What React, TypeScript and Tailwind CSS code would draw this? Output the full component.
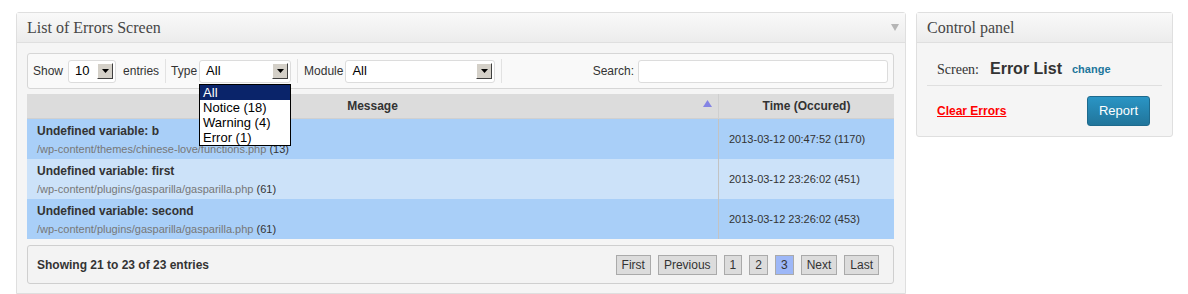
import React from "react";

const sans = "font-['Liberation_Sans',Arial,sans-serif]";
const serif = "font-['Liberation_Serif','Times_New_Roman',serif]";

const SelectBox: React.FC<{ value: string; w: string }> = ({ value, w }) => (
  <div className={`${w} h-[23px] flex items-center justify-between bg-white border border-[#dcdcdc] rounded-[3px] pl-[6px] pr-[2px]`}>
    <span className="text-[13px] text-black">{value}</span>
    <span className="w-[16px] h-[16px] bg-[#d4d0c8] border border-t-white border-l-white border-r-[#404040] border-b-[#404040] flex items-center justify-center">
      <svg width="7" height="4" viewBox="0 0 7 4">
        <path d="M0 0h7L3.5 4z" fill="#000" />
      </svg>
    </span>
  </div>
);

const rows = [
  { msg: "Undefined variable: b", file: "/wp-content/themes/chinese-love/functions.php", line: "(13)", time: "2013-03-12 00:47:52 (1170)", bg: "bg-[#a9cff8]" },
  { msg: "Undefined variable: first", file: "/wp-content/plugins/gasparilla/gasparilla.php", line: "(61)", time: "2013-03-12 23:26:02 (451)", bg: "bg-[#cce2f9]" },
  { msg: "Undefined variable: second", file: "/wp-content/plugins/gasparilla/gasparilla.php", line: "(61)", time: "2013-03-12 23:26:02 (453)", bg: "bg-[#a9cff8]" },
];

const pages = ["First", "Previous", "1", "2", "3", "Next", "Last"];

export default function App() {
  return (
    <div className={`w-[1188px] h-[294px] bg-white flex items-start gap-[10px] pl-[16px] pt-[12px] overflow-hidden ${sans} text-[#333]`}>
      {/* main panel */}
      <div className="w-[890px] h-[282px] border border-[#dfdfdf] rounded-t-[3px] bg-[#f5f5f5] flex flex-col">
        <div className="h-[30px] flex items-center justify-between border-b border-[#dfdfdf] bg-gradient-to-b from-[#f9f9f9] to-[#ececec] pl-[10px] pr-[6px]">
          <span className={`${serif} text-[16px] text-[#464646]`}>List of Errors Screen</span>
          <svg width="8" height="7" viewBox="0 0 8 7">
            <path d="M0 0h8L4 7z" fill="#b5b5b5" />
          </svg>
        </div>
        <div className="pl-[10px] pr-[11px] pt-[10px] flex flex-col">
          {/* toolbar */}
          <div className="h-[36px] border border-[#d6d6d6] rounded-[3px] bg-[#f9f9f9] flex items-center px-[5px] text-[12px] relative">
            <span>Show</span>
            <div className="ml-[5px]">
              <SelectBox value="10" w="w-[48px]" />
            </div>
            <span className="ml-[7px]">entries</span>
            <span className="w-px h-[24px] bg-[#e2e2e2] ml-[6px]" />
            <span className="ml-[5px]">Type</span>
            <div className="ml-[2px] relative">
              <SelectBox value="All" w="w-[92px]" />
              <div className="absolute left-0 top-[24px] w-[92px] bg-white border border-black text-[13px] text-black leading-[15px] z-10">
                <div className="bg-[#0a246a] text-white pl-[3px]">All</div>
                <div className="pl-[3px]">Notice (18)</div>
                <div className="pl-[3px]">Warning (4)</div>
                <div className="pl-[3px]">Error (1)</div>
              </div>
            </div>
            <span className="w-px h-[24px] bg-[#e2e2e2] ml-[6px]" />
            <span className="ml-[6px]">Module</span>
            <div className="ml-[2px]">
              <SelectBox value="All" w="w-[150px]" />
            </div>
            <span className="w-px h-[24px] bg-[#e2e2e2] ml-[6px]" />
            <span className="ml-auto">Search:</span>
            <div className="ml-[4px] w-[250px] h-[23px] bg-white border border-[#dcdcdc] rounded-[3px]" />
          </div>
          {/* table */}
          <div className="mt-[5px] flex flex-col">
            <div className="h-[25px] flex bg-[#dcdcdc] text-[12px] font-bold border-b border-[#d0d0d0]">
              <div className="w-[692px] relative flex items-center justify-center border-r border-[#cfcfcf]">
                Message
                <svg className="absolute right-[6px] top-[6px]" width="9" height="7" viewBox="0 0 9 7">
                  <path d="M4.5 0L9 7H0z" fill="#8484e4" />
                </svg>
              </div>
              <div className="flex-1 flex items-center justify-center">Time (Occured)</div>
            </div>
            {rows.map((r) => (
              <div key={r.time} className={`h-[40px] flex ${r.bg}`}>
                <div className="w-[692px] border-r border-[#c3c3c3] pl-[10px] pt-[4px]">
                  <div className="text-[12px] font-bold leading-[17px] text-[#333]">{r.msg}</div>
                  <div className="text-[11px] leading-[18px]">
                    <span className="text-[#777]">{r.file}</span> <span className="text-[#333]">{r.line}</span>
                  </div>
                </div>
                <div className="flex-1 flex items-center pl-[10px] text-[11px] text-[#333]">{r.time}</div>
              </div>
            ))}
          </div>
          {/* footer */}
          <div className="mt-[6px] h-[39px] border border-[#cfcfcf] rounded-[3px] bg-[#f3f3f3] flex items-center justify-between pl-[9px] pr-[14px]">
            <span className="text-[12px] font-bold">Showing 21 to 23 of 23 entries</span>
            <div className="flex gap-[7px]">
              {pages.map((p) => (
                <span
                  key={p}
                  className={`h-[20px] px-[5px] flex items-center border border-[#aaa] text-[12px] text-[#333] ${p === "3" ? "bg-[#9db7f7]" : "bg-[#dcdcdc]"}`}
                >
                  {p}
                </span>
              ))}
            </div>
          </div>
        </div>
      </div>

      {/* control panel */}
      <div className="w-[257px] h-[125px] border border-[#dfdfdf] rounded-[3px] bg-[#f5f5f5] flex flex-col">
        <div className="h-[30px] flex items-center border-b border-[#dfdfdf] bg-gradient-to-b from-[#f9f9f9] to-[#ececec] pl-[10px]">
          <span className={`${serif} text-[16px] text-[#464646]`}>Control panel</span>
        </div>
        <div className="px-[10px]">
          <div className="h-[43px] flex items-center pt-[10px] pl-[10px] border-b border-[#dfdfdf]">
            <span className={`${serif} text-[14px] text-[#333]`}>Screen:</span>
            <span className="ml-[11px] text-[16px] font-bold text-[#333]">Error List</span>
            <span className="ml-[10px] text-[11px] font-bold text-[#21759b]">change</span>
          </div>
          <div className="h-[49px] flex items-center justify-between pl-[10px] pr-[12px]">
            <span className="text-[12px] font-bold text-[#ff0000] underline">Clear Errors</span>
            <span className="w-[63px] h-[30px] flex items-center justify-center rounded-[3px] border border-[#1e6a8d] bg-gradient-to-b from-[#2a95c5] to-[#21759b] text-white text-[13px]">
              Report
            </span>
          </div>
        </div>
      </div>
    </div>
  );
}
